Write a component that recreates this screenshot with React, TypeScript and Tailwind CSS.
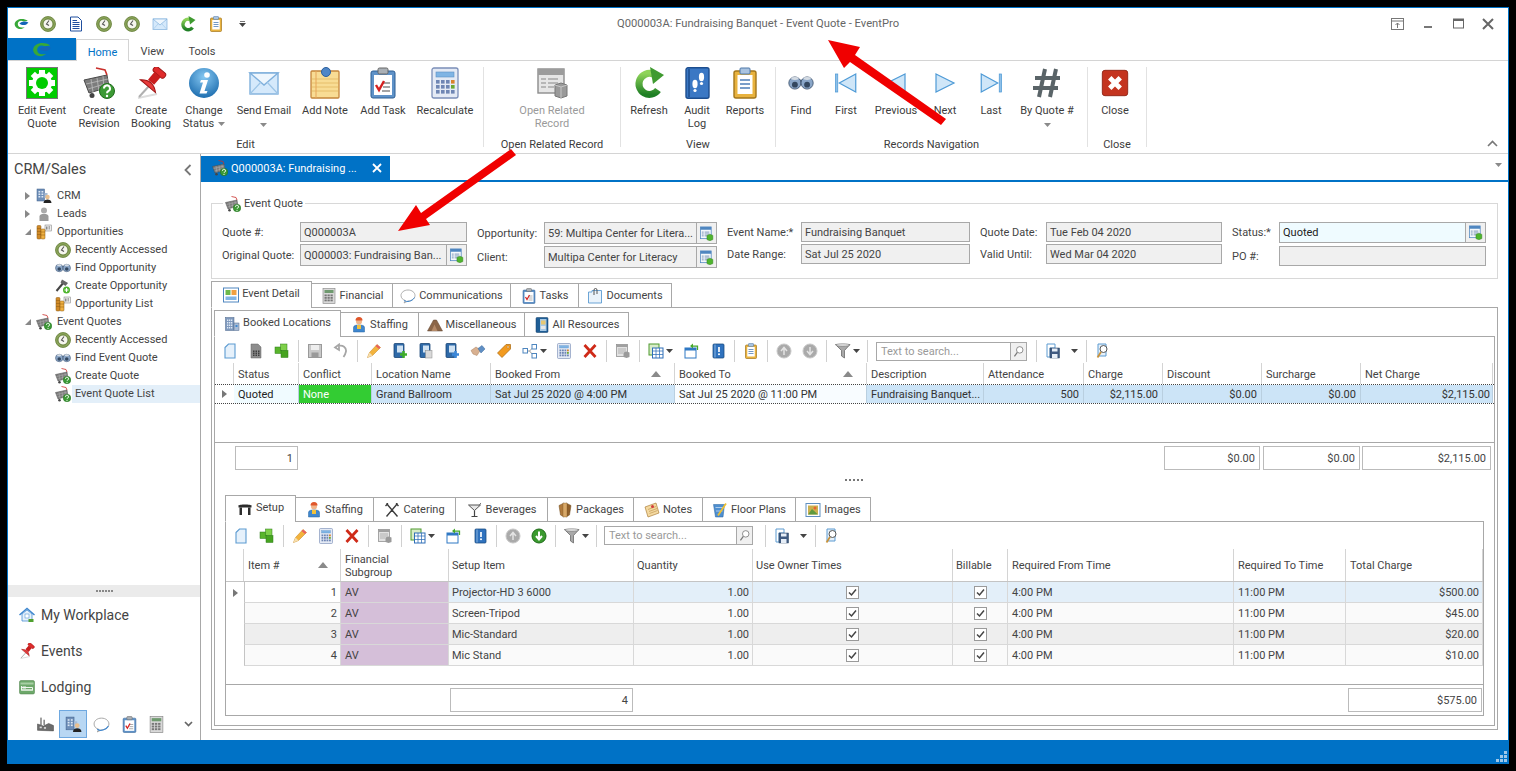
import React from 'react';

// small helper: every icon is drawn in a 32x32 box and scaled
const ic = (body: React.ReactNode) =>
  function Icon({ s = 16 }: { s?: number }) {
    return (
      <svg width={s} height={s} viewBox="0 0 32 32" className="block shrink-0">
        {body}
      </svg>
    );
  };

const Badge = ({ x = 24, y = 24, r = 7.5 }: { x?: number; y?: number; r?: number }) => (
  <>
    <circle cx={x} cy={y} r={r} fill="#3c9a35" stroke="#1f6b1c" />
    <path d={`M${x - 3} ${y - 2.5}a3 3 0 1 1 4.5 2.5q-1.5 .8-1.5 2.2`} fill="none" stroke="#fff" strokeWidth="2" />
    <circle cx={x} cy={y + 5} r="1.2" fill="#fff" />
  </>
);

const Logo = ic(
  <>
    <path d="M3 17C4 8 18 4 28 11L20 12C14 9 9 12 9 17C9 23 15 25 22 23C16 29 4 27 3 17Z" fill="#38a838" />
    <path d="M12 16c4-4 11-5 17-2c-3 5-11 7-17 2z" fill="#1565b8" />
  </>
);
const Clock = ic(
  <>
    <circle cx="16" cy="16" r="15" fill="#8aa35a" stroke="#5f7a30" strokeWidth="1.5" />
    <circle cx="16" cy="16" r="10" fill="#f6f6ee" stroke="#4e6b1f" strokeWidth="1.5" />
    <path d="M18 9l-5 7l5 3" fill="none" stroke="#555" strokeWidth="2.2" />
  </>
);
const DocLines = ic(
  <>
    <path d="M5 2h15l7 7v21H5z" fill="#fff" stroke="#1f4e9e" strokeWidth="2" />
    <path d="M9 9h9M9 13h14M9 17h14M9 21h14M9 25h14" stroke="#1f4e9e" strokeWidth="2" />
  </>
);
const Mail = ic(
  <>
    <rect x="2" y="6" width="28" height="21" fill="#d5e9fb" stroke="#7fb0dc" strokeWidth="1.4" />
    <path d="M2 6l14 12L30 6z" fill="#eef6fd" stroke="#7fb0dc" strokeWidth="1.4" />
    <path d="M2 27l11-12M30 27L19 15" stroke="#9cc4e6" strokeWidth="1.2" />
  </>
);
const Refresh = ic(
  <>
    <defs>
      <linearGradient id="rf" x1="0" y1="0" x2="0" y2="1">
        <stop offset="0" stopColor="#8fd45a" />
        <stop offset="1" stopColor="#1f7f25" />
      </linearGradient>
    </defs>
    <path d="M25 23A10.5 10.5 0 1 1 20 7" fill="none" stroke="url(#rf)" strokeWidth="7" />
    <path d="M17 0L31 8L20 17Z" fill="#3f9a30" />
  </>
);
const ClipYellow = ic(
  <>
    <rect x="5" y="4" width="22" height="27" rx="2" fill="#e8b23e" stroke="#a3761a" strokeWidth="1.4" />
    <rect x="8.5" y="8" width="15" height="19" fill="#fff" />
    <path d="M11 13h10M11 17h10M11 21h10" stroke="#4f7fb8" strokeWidth="1.6" />
    <rect x="11" y="1" width="10" height="6" rx="1" fill="#a9c3e0" stroke="#4e78a8" />
  </>
);
const Gear = ic(
  <>
    <rect x="0.5" y="0.5" width="31" height="31" fill="#00cc00" stroke="#777" />
    {[0, 45, 90, 135].map((a) => (
      <rect key={a} x="13" y="3" width="6" height="26" fill="#fff" transform={`rotate(${a} 16 16)`} />
    ))}
    <circle cx="16" cy="16" r="10" fill="#fff" />
    <circle cx="16" cy="16" r="6" fill="#00cc00" />
  </>
);
const Cart = ic(
  <>
    <path d="M1 13L24 8L26 20L6 26Z" fill="#7c7c7c" stroke="#4a4a4a" />
    <path d="M3 17L25 12M5 22L25 16M8 12L10 25M14 11L16 24M20 9L21 22" stroke="#bdbdbd" strokeWidth=".8" />
    <path d="M24 8L22 3L13 1" fill="none" stroke="#c9302c" strokeWidth="1.6" />
    <circle cx="9" cy="28.5" r="2.5" fill="#444" />
    <Badge />
  </>
);
const Pin = ic(
  <>
    <path d="M3 31L22 27" stroke="#ddd" strokeWidth="2" />
    <path d="M4 30L14 19" stroke="#b0b0b0" strokeWidth="2" />
    <g transform="rotate(40 18 13)">
      <rect x="11" y="0" width="14" height="6" rx="2.5" fill="#e02b2b" stroke="#9d1414" />
      <rect x="14" y="6" width="8" height="10" fill="#c91d1d" />
      <path d="M8 21q10-9 20 0z" fill="#e83a3a" stroke="#9d1414" />
    </g>
  </>
);
const Info = ic(
  <>
    <defs>
      <radialGradient id="nf" cx=".5" cy=".3" r=".75">
        <stop offset="0" stopColor="#86c8f2" />
        <stop offset="1" stopColor="#1768ab" />
      </radialGradient>
    </defs>
    <circle cx="16" cy="16" r="15" fill="url(#nf)" />
    <circle cx="19" cy="8" r="2.8" fill="#fff" />
    <path d="M13 13h7l-3.5 11h3l-1 2.5h-7l3.5-11h-3z" fill="#fff" />
  </>
);
const Note = ic(
  <>
    <rect x="2" y="4" width="28" height="27" rx="1" fill="#f8dc94" stroke="#c4853a" strokeWidth="1.3" />
    <path d="M3 12h26M3 16h26M3 20h26M3 24h26" stroke="#e6bd6a" strokeWidth="1.2" />
    <path d="M7 4v27" stroke="#e6a65a" />
    <circle cx="17" cy="5" r="4.5" fill="#4f86c6" stroke="#2b5f9e" />
  </>
);
const Task = ic(
  <>
    <rect x="4" y="4" width="24" height="27" rx="2" fill="#5f92c8" stroke="#2d5e94" />
    <rect x="7" y="8" width="18" height="20" fill="#fff" />
    <path d="M15 16h8M16 20h7M15 24h8" stroke="#888" strokeWidth="1.3" />
    <path d="M9 18l3 5l5-9" fill="none" stroke="#d42020" strokeWidth="2.4" />
    <rect x="11" y="1" width="10" height="6" rx="1.5" fill="#aab0b6" stroke="#666" />
  </>
);
const Calc = ic(
  <>
    <rect x="3" y="1" width="26" height="30" rx="2" fill="#e4eaf5" stroke="#7b8fb8" strokeWidth="1.3" />
    <rect x="7" y="5" width="18" height="5" fill="#7fb4e4" stroke="#5b8fc2" strokeWidth=".6" />
    {[13, 18, 23].map((y) =>
      [7, 12, 17, 22].map((x) => (
        <rect key={`${x}${y}`} x={x} y={y} width="3.6" height="3.6" fill={x === 22 ? (y === 13 ? '#d9822b' : y === 18 ? '#6ca832' : '#6f86b4') : '#6f86b4'} />
      )),
    )}
  </>
);
const CalcGray = ic(
  <>
    <rect x="4" y="1" width="24" height="30" fill="#d9d9d9" stroke="#8a8a8a" strokeWidth="1.3" />
    <rect x="7" y="4" width="18" height="6" fill="#6f9a6f" />
    {[13, 18, 23].map((y) =>
      [7, 13, 19].map((x) => <rect key={`${x}${y}`} x={x} y={y} width="4.5" height="3.6" fill="#777" />),
    )}
  </>
);
const OpenRelated = ic(
  <>
    <rect x="2" y="2" width="26" height="24" fill="#e6e6e6" stroke="#8c8c8c" strokeWidth="1.4" />
    <rect x="2" y="2" width="26" height="6" fill="#9c9c9c" />
    <path d="M5 12h5M12 12h10M5 16h5M12 16h10M5 20h5M12 20h6" stroke="#a8a8a8" strokeWidth="1.4" />
    <path d="M19 18l6-2l6 2v11l-6 2l-6-2z" fill="#9a9a9a" stroke="#777" />
    <path d="M25 20v11M19 18l6 2l6-2" fill="none" stroke="#c6c6c6" />
  </>
);
const Lookup = ic(
  <>
    <rect x="3" y="2" width="23" height="25" fill="#f4f8fc" stroke="#4f86c0" strokeWidth="1.6" />
    <rect x="3" y="2" width="23" height="6" fill="#4f86c0" />
    <path d="M6 13h4M12 13h10M6 17h4M12 17h10M6 21h4M12 21h6" stroke="#5a7aa5" strokeWidth="1.6" />
    <path d="M17 20l6-2.5l6.5 2.5v9l-6.5 2.5l-6-2.5z" fill="#4fb52e" stroke="#2c7d18" />
  </>
);
const AuditBook = ic(
  <>
    <rect x="5" y="0.8" width="23" height="30.4" rx="2" fill="#3b78c4" stroke="#1d4e8f" strokeWidth="1.4" />
    <path d="M8 2v28" stroke="#1d4e8f" strokeWidth="1.5" />
    <ellipse cx="20.5" cy="10" rx="2.6" ry="4.2" fill="#fff" />
    <ellipse cx="20.5" cy="16.5" rx="1.6" ry="1.6" fill="#fff" />
    <ellipse cx="14" cy="17" rx="2.6" ry="4.2" fill="#fff" />
    <ellipse cx="14" cy="23.5" rx="1.6" ry="1.6" fill="#fff" />
  </>
);
const Binoculars = ic(
  <>
    <rect x="12" y="12" width="8" height="6" fill="#42536a" />
    <circle cx="8.5" cy="16" r="7.5" fill="#8aa6c8" stroke="#3a4f6a" />
    <circle cx="23.5" cy="16" r="7.5" fill="#8aa6c8" stroke="#3a4f6a" />
    <circle cx="8.5" cy="18" r="3.6" fill="#33475f" />
    <circle cx="23.5" cy="18" r="3.6" fill="#33475f" />
    <ellipse cx="8.5" cy="10.5" rx="4.5" ry="1.8" fill="#d4dbe3" />
    <ellipse cx="23.5" cy="10.5" rx="4.5" ry="1.8" fill="#d4dbe3" />
  </>
);
const navTri = { fill: '#cfe6f8', stroke: '#4e9ad6', strokeWidth: 1.6 };
const First = ic(
  <>
    <rect x="2" y="4" width="3" height="24" fill="#8fc0e8" stroke="#4e9ad6" />
    <path d="M29 4L7 16L29 28Z" {...navTri} />
  </>
);
const Prev = ic(<path d="M28 4L4 16L28 28Z" {...navTri} />);
const Next = ic(<path d="M4 4L28 16L4 28Z" {...navTri} />);
const Last = ic(
  <>
    <rect x="27" y="4" width="3" height="24" fill="#8fc0e8" stroke="#4e9ad6" />
    <path d="M3 4L25 16L3 28Z" {...navTri} />
  </>
);
const Hash = ic(<path d="M14 2L8 30M25 2L19 30M4 11H29M2 21H27" stroke="#5a6468" strokeWidth="4" fill="none" />);
const CloseRed = ic(
  <>
    <rect x="1.5" y="1.5" width="29" height="29" rx="3" fill="#c4341f" stroke="#8e2010" />
    <path d="M10 10L22 22M22 10L10 22" stroke="#fff" strokeWidth="5.5" />
  </>
);
const NewDoc = ic(<path d="M6 9l7-7h13v28H6z" fill="#e6f1fb" stroke="#5c9bd1" strokeWidth="2.2" />);
const SimDoc = ic(
  <>
    <path d="M6 2h14l6 6v22H6z" fill="#8d8d8d" stroke="#666" />
    {[15, 19, 23].map((y) =>
      [10, 15, 20].map((x) => <rect key={`${x}${y}`} x={x} y={y} width="3" height="3" fill="#3e3e3e" />),
    )}
  </>
);
const Cubes = ic(
  <>
    <rect x="2" y="8" width="13" height="13" fill="#59b52c" stroke="#2c7d18" />
    <rect x="13" y="2" width="13" height="13" fill="#7ed04a" stroke="#2c7d18" />
    <rect x="14" y="15" width="14" height="14" fill="#46a320" stroke="#2c7d18" />
  </>
);
const Floppy = ({ s = 16, c = '#9a9a9a', d = '#c9c9c9' }: { s?: number; c?: string; d?: string }) => (
  <svg width={s} height={s} viewBox="0 0 32 32" className="block shrink-0">
    <rect x="3" y="3" width="26" height="26" fill={d} stroke={c} strokeWidth="2" />
    <rect x="8" y="4" width="16" height="10" fill="#eee" />
    <rect x="9" y="19" width="14" height="10" fill={c} />
  </svg>
);
const SaveGray = () => <Floppy />;
const Undo = ic(<path d="M10 6C20 3 27 9 26 17C25 22 23 25 21 28M4 9L12 3L12 14Z" fill="none" stroke="#a6a6a6" strokeWidth="3.5" />);
const Pencil = ic(
  <>
    <path d="M3 29L7 19L22 3L29 9L13 25Z" fill="#f3b33d" stroke="#c07f16" />
    <path d="M3 29L7 19L13 25Z" fill="#f6dfb0" />
    <path d="M22 3L29 9L26 12L19 6Z" fill="#e86060" />
  </>
);
const BookBase = () => (
  <>
    <rect x="4" y="1" width="20" height="28" rx="2" fill="#2f6aa8" stroke="#123f70" strokeWidth="1.5" />
    <rect x="10" y="5" width="12" height="14" fill="#cfe2f3" />
  </>
);
const BookPlus = ic(
  <>
    <BookBase />
    <path d="M23 16v14M16 23h14" stroke="#3fae2a" strokeWidth="5" />
  </>
);
const BookCopy = ic(
  <>
    <BookBase />
    <rect x="15" y="15" width="13" height="15" fill="#d9d9d9" stroke="#8a8a8a" />
  </>
);
const BookBlue = ic(
  <>
    <BookBase />
    <path d="M23 16v14M16 23h14" stroke="#3b87d8" strokeWidth="5" />
  </>
);
const Handshake = ic(
  <>
    <path d="M2 15L12 8L21 14L14 25L6 22Z" fill="#d8b090" stroke="#a8805f" />
    <path d="M16 11L24 5L30 12L22 20Z" fill="#5f8fc4" stroke="#3e6a9c" />
  </>
);
const TagIcon = ic(
  <>
    <path d="M3 20L20 3L29 3L29 12L12 29Z" fill="#f29a1f" stroke="#a8650c" strokeWidth="1.4" />
    <circle cx="24" cy="8" r="2" fill="#fff" stroke="#a8650c" />
  </>
);
const Nodes = ic(
  <>
    <path d="M9 16H15L23 8M15 16L23 25" fill="none" stroke="#777" strokeWidth="1.5" />
    <rect x="2" y="11" width="9" height="9" fill="#fff" stroke="#4e86bf" strokeWidth="2" />
    <rect x="20" y="3" width="9" height="9" fill="#fff" stroke="#4e86bf" strokeWidth="2" />
    <rect x="20" y="21" width="9" height="9" fill="#fff" stroke="#4e86bf" strokeWidth="2" />
  </>
);
const RedX = ic(<path d="M5 4L27 28M27 4L5 28" stroke="#cf2a18" strokeWidth="5.5" />);
const GrayDoc = ic(
  <>
    <rect x="3" y="3" width="22" height="24" fill="#e2e2e2" stroke="#8c8c8c" strokeWidth="1.5" />
    <rect x="3" y="3" width="22" height="5" fill="#a0a0a0" />
    <path d="M6 12h16M6 16h16M6 20h10" stroke="#a4a4a4" strokeWidth="1.6" />
    <path d="M17 19l6-2l6 2v9l-6 2l-6-2z" fill="#9a9a9a" />
  </>
);
const GridGreen = ic(
  <>
    <rect x="2" y="2" width="20" height="22" fill="#d8ecc8" stroke="#4f9a2f" strokeWidth="2" />
    <rect x="9" y="10" width="21" height="20" fill="#fff" stroke="#2f6fb8" strokeWidth="2" />
    <path d="M9 16h21M9 23h21M16 10v20M23 10v20" stroke="#2f6fb8" strokeWidth="1.5" />
  </>
);
const WinRestore = ic(
  <>
    <rect x="2" y="10" width="22" height="20" fill="#fff" stroke="#2f78c4" strokeWidth="2" />
    <rect x="2" y="10" width="22" height="5" fill="#2f78c4" />
    <path d="M14 6H27V14" fill="none" stroke="#47a82c" strokeWidth="2.5" />
    <path d="M18 1L12 6L18 11Z" fill="#47a82c" />
  </>
);
const BookI = ic(
  <>
    <rect x="6" y="2" width="22" height="28" rx="2" fill="#2f72be" stroke="#17487e" strokeWidth="1.5" />
    <path d="M10 3v26" stroke="#a9c9ea" strokeWidth="1.5" />
    <path d="M18 8v10" stroke="#fff" strokeWidth="3.4" />
    <circle cx="18" cy="22.5" r="2" fill="#fff" />
  </>
);
const CircleUp = ic(
  <>
    <circle cx="16" cy="16" r="14" fill="#aaaaaa" stroke="#c8c8c8" strokeWidth="2" />
    <path d="M16 24V11M10 16l6-7l6 7" fill="none" stroke="#e4e4e4" strokeWidth="3" />
  </>
);
const CircleDown = ic(
  <>
    <circle cx="16" cy="16" r="14" fill="#aaaaaa" stroke="#c8c8c8" strokeWidth="2" />
    <path d="M16 8V21M10 16l6 7l6-7" fill="none" stroke="#e4e4e4" strokeWidth="3" />
  </>
);
const GreenDown = ic(
  <>
    <circle cx="16" cy="16" r="14" fill="#3a9a2e" stroke="#1e6b18" strokeWidth="2" />
    <path d="M16 7V21M10 16l6 7l6-7" fill="none" stroke="#fff" strokeWidth="4" />
  </>
);
const Funnel = ic(
  <>
    <path d="M1 3H30L19 15V30L13 26V15Z" fill="#a9a9a9" stroke="#5d5d5d" strokeWidth="1.4" />
    <ellipse cx="15.5" cy="4" rx="14" ry="2.5" fill="#e6e6e6" stroke="#5d5d5d" />
  </>
);
const SaveBlue = ic(
  <>
    <path d="M4 2H20V10H10V28H4Z" fill="#fff" stroke="#5c9bd1" strokeWidth="2" />
    <rect x="10" y="10" width="19" height="20" fill="#3f5a80" stroke="#24405f" />
    <rect x="14" y="11" width="11" height="6" fill="#e6eef7" />
    <rect x="14" y="22" width="11" height="8" fill="#e6eef7" />
  </>
);
const PageMag = ic(
  <>
    <path d="M6 2H22V26H6Z" fill="#e6f1fb" stroke="#5c9bd1" strokeWidth="2" />
    <circle cx="17" cy="12" r="7" fill="#fff" stroke="#555" strokeWidth="2" />
    <path d="M12 18L5 29" stroke="#c99138" strokeWidth="3.5" />
  </>
);
const MagGlass = ic(
  <>
    <circle cx="19" cy="12" r="8" fill="#fff" stroke="#777" strokeWidth="2" />
    <path d="M13 18L6 28" stroke="#777" strokeWidth="3" />
  </>
);
const Panes = ic(
  <>
    <rect x="1" y="2" width="30" height="28" fill="#fff" stroke="#4f86c0" strokeWidth="2" />
    <rect x="5" y="6" width="10" height="10" fill="#6cb84a" />
    <rect x="17" y="6" width="10" height="10" fill="#f0a040" />
    <rect x="5" y="19" width="22" height="7" fill="#7fb4e4" />
  </>
);
const Bubble = ic(
  <>
    <path d="M16 4C8 4 2 9 2 15C2 20 6 24 11 25L8 30L16 26C24 26 30 21 30 15C30 9 24 4 16 4Z" fill="#fff" stroke="#9a9a9a" strokeWidth="1.6" />
    <path d="M8 25C14 29 24 27 29 19" fill="none" stroke="#3f87cf" strokeWidth="2" />
  </>
);
const DocClip = ic(
  <>
    <path d="M3 8H10V5H29V30H3Z" fill="#eaf3fb" stroke="#5c9bd1" strokeWidth="1.8" />
    <path d="M14 14V4a3 3 0 0 1 6 0V12" fill="none" stroke="#555" strokeWidth="2" />
  </>
);
const Building = ic(
  <>
    <rect x="3" y="3" width="17" height="26" fill="#7f99bd" stroke="#4b6589" />
    <rect x="20" y="14" width="10" height="15" fill="#a9bcd6" stroke="#4b6589" />
    {[7, 12, 17, 22].map((y) =>
      [6, 10, 14].map((x) => <rect key={`${x}${y}`} x={x} y={y} width="2.6" height="3" fill="#dfe9f5" />),
    )}
    <rect x="23" y="18" width="4" height="4" fill="#3f87cf" />
  </>
);
const Worker = ic(
  <>
    <circle cx="16" cy="9" r="6" fill="#f1b58a" />
    <path d="M9 7a7 7 0 0 1 14 0z" fill="#e0562a" />
    <path d="M5 30V21C5 17 10 16 16 16S27 17 27 21V30Z" fill="#3f87cf" stroke="#24639f" />
    <rect x="12" y="16" width="8" height="8" fill="#f3c23c" />
  </>
);
const Mound = ic(
  <>
    <path d="M1 28L13 6H19L31 28Z" fill="#8b6648" stroke="#5f4330" />
    <path d="M9 28L15 15L21 28Z" fill="#b48a68" />
  </>
);
const Resources = ic(
  <>
    <rect x="4" y="1" width="24" height="30" rx="2" fill="#1f5e96" stroke="#113f69" />
    <rect x="12" y="4" width="13" height="24" fill="#a7c9e6" />
    <rect x="14" y="7" width="9" height="8" fill="#e8c873" />
    <rect x="14" y="18" width="9" height="6" fill="#e8e8e8" />
  </>
);
const Table = ic(
  <>
    <path d="M3 9C3 6 29 6 29 9V13H3Z" fill="#2c2c2c" />
    <path d="M5 13H10V28H5ZM22 13H27V28H22Z" fill="#2c2c2c" />
  </>
);
const Cutlery = ic(<path d="M5 3L27 29M27 3L5 29M3 8L8 3M24 3L29 8" stroke="#3c3c3c" strokeWidth="2.8" fill="none" />);
const Martini = ic(
  <>
    <path d="M3 6H27L15 17Z" fill="#e6e6e6" stroke="#555" strokeWidth="2" />
    <path d="M15 17V28M9 29H21" stroke="#444" strokeWidth="2.4" />
    <path d="M23 7L28 2" stroke="#777" strokeWidth="2" />
  </>
);
const BoxIcon = ic(
  <>
    <path d="M4 7L14 2V30L7 26Z" fill="#b07a3c" stroke="#6e4a1e" />
    <path d="M28 7L18 2V30L25 26Z" fill="#8f5f2a" stroke="#6e4a1e" />
    <rect x="12" y="2" width="8" height="28" fill="#d8a868" stroke="#6e4a1e" strokeWidth=".6" />
  </>
);
const NoteTilt = ic(
  <>
    <path d="M2 10L24 2L30 22L8 30Z" fill="#f4d9a0" stroke="#ad7f3b" strokeWidth="1.4" />
    <path d="M8 15L24 9M10 19L26 13M11 23L27 17" stroke="#b98d4a" strokeWidth="1.2" />
    <circle cx="17" cy="9" r="3" fill="#d43c3c" />
  </>
);
const FloorPlan = ic(
  <>
    <path d="M3 5H25L22 30H7Z" fill="#4f8fd0" stroke="#24609f" />
    <path d="M7 11H22M8 18H21" stroke="#cfe2f5" strokeWidth="1.5" />
    <path d="M12 27L28 3" stroke="#f0c030" strokeWidth="3.5" />
  </>
);
const Picture = ic(
  <>
    <rect x="2" y="3" width="28" height="26" fill="#fff" stroke="#5f8fc0" strokeWidth="2" />
    <rect x="6" y="7" width="20" height="18" fill="#cbb04e" />
    <path d="M6 25L14 14L26 25Z" fill="#5f9a3e" />
    <circle cx="20" cy="12" r="3" fill="#e8642c" />
  </>
);
const Person = ic(
  <>
    <circle cx="16" cy="9" r="6" fill="#aaaaaa" />
    <path d="M7 30V21C7 17 11 16 16 16S25 17 25 21V30Z" fill="#999" />
  </>
);
const BuildingPerson = ic(
  <>
    <rect x="2" y="2" width="15" height="24" fill="#6f8fb8" stroke="#3f5f8a" />
    {[6, 11, 16].map((y) =>
      [5, 11].map((x) => <rect key={`${x}${y}`} x={x} y={y} width="3.5" height="3" fill="#dde8f4" />),
    )}
    <rect x="17" y="10" width="6" height="10" fill="#a8bcd6" />
    <circle cx="23" cy="18" r="4.5" fill="#e9c08f" />
    <path d="M15 30C15 25 19 23 23 23S31 25 31 30Z" fill="#222" />
  </>
);
const Coins = ic(
  <>
    <rect x="18" y="2" width="13" height="12" fill="#eee" stroke="#777" />
    <rect x="20" y="5" width="3" height="6" fill="#888" />
    <rect x="25" y="4" width="3" height="7" fill="#aaa" />
    <rect x="2" y="3" width="8" height="27" rx="2" fill="#d08a28" stroke="#8d5a12" />
    <rect x="10" y="10" width="8" height="20" rx="2" fill="#eeb042" stroke="#8d5a12" />
    <path d="M2 9h8M2 15h8M2 21h8M10 16h8M10 22h8" stroke="#8d5a12" strokeWidth="1" />
  </>
);
const ToolPlus = ic(
  <>
    <path d="M3 26L18 8" stroke="#444" strokeWidth="4" />
    <path d="M14 3L26 10L21 16L11 9Z" fill="#666" />
    <circle cx="23" cy="24" r="7" fill="#4fb52e" />
    <path d="M23 20v8M19 24h8" stroke="#fff" strokeWidth="2.4" />
  </>
);
const House = ic(
  <>
    <path d="M1 16L16 3L31 16" fill="none" stroke="#3f87cf" strokeWidth="3" />
    <path d="M6 14V28H26V14L16 6Z" fill="#e6f1fb" stroke="#3f87cf" strokeWidth="1.5" />
    <rect x="12" y="14" width="8" height="8" fill="#fff" stroke="#3f87cf" />
    <rect x="19" y="24" width="10" height="6" fill="#4fa02e" />
  </>
);
const Bed = ic(
  <>
    <rect x="1" y="3" width="30" height="27" rx="3" fill="#6da86a" stroke="#4a7f47" />
    <rect x="3" y="7" width="26" height="4" fill="#a8d0a4" />
    <path d="M5 23V14M27 23V17H5" fill="none" stroke="#f0f6ee" strokeWidth="2" />
    <rect x="7" y="15" width="7" height="4" fill="#f0f6ee" />
    <path d="M5 22H27" stroke="#f0f6ee" strokeWidth="3" />
  </>
);
const Factory = ic(
  <>
    <rect x="6" y="3" width="3" height="14" fill="#888" />
    <rect x="12" y="7" width="3" height="10" fill="#888" />
    <path d="M1 27V15L12 19L22 14L31 18V28Z" fill="#6c6c6c" stroke="#444" />
    <rect x="5" y="20" width="4" height="3" fill="#ddd" />
    <rect x="13" y="21" width="4" height="3" fill="#ddd" />
  </>
);
const Caret = () => (
  <svg width="7" height="4" viewBox="0 0 7 4" className="block shrink-0">
    <path d="M0 0H7L3.5 4Z" fill="#444" />
  </svg>
);
const GrayCaret = () => (
  <svg width="7" height="4" viewBox="0 0 7 4" className="block shrink-0">
    <path d="M0 0H7L3.5 4Z" fill="#8a8a8a" />
  </svg>
);

type RibBtn = { label: string[]; icon: React.ReactNode; w: string; caret?: 'line' | 'below'; muted?: boolean };
type RibGroup = { title: string; w: string; pl: string; buttons: RibBtn[] };

const ribbon: RibGroup[] = [
  {
    title: 'Edit',
    w: 'w-[476px]',
    pl: 'pl-[6px]',
    buttons: [
      { label: ['Edit Event', 'Quote'], icon: <Gear s={32} />, w: 'w-[56px]' },
      { label: ['Create', 'Revision'], icon: <Cart s={32} />, w: 'w-[58px]' },
      { label: ['Create', 'Booking'], icon: <Pin s={32} />, w: 'w-[46px]' },
      { label: ['Change', 'Status'], icon: <Info s={32} />, w: 'w-[60px]', caret: 'line' },
      { label: ['Send Email'], icon: <Mail s={32} />, w: 'w-[60px]', caret: 'below' },
      { label: ['Add Note'], icon: <Note s={32} />, w: 'w-[62px]' },
      { label: ['Add Task'], icon: <Task s={32} />, w: 'w-[54px]' },
      { label: ['Recalculate'], icon: <Calc s={32} />, w: 'w-[70px]' },
    ],
  },
  {
    title: 'Open Related Record',
    w: 'w-[137px]',
    pl: 'pl-0',
    buttons: [{ label: ['Open Related', 'Record'], icon: <OpenRelated s={32} />, w: 'w-[136px]', muted: true }],
  },
  {
    title: 'View',
    w: 'w-[155px]',
    pl: 'pl-0',
    buttons: [
      { label: ['Refresh'], icon: <Refresh s={32} />, w: 'w-[56px]' },
      { label: ['Audit', 'Log'], icon: <AuditBook s={32} />, w: 'w-[40px]' },
      { label: ['Reports'], icon: <ClipYellow s={32} />, w: 'w-[56px]' },
    ],
  },
  {
    title: 'Records Navigation',
    w: 'w-[312px]',
    pl: 'pl-0',
    buttons: [
      { label: ['Find'], icon: <Binoculars s={26} />, w: 'w-[50px]' },
      { label: ['First'], icon: <First s={24} />, w: 'w-[40px]' },
      { label: ['Previous'], icon: <Prev s={24} />, w: 'w-[60px]' },
      { label: ['Next'], icon: <Next s={24} />, w: 'w-[38px]' },
      { label: ['Last'], icon: <Last s={24} />, w: 'w-[54px]' },
      { label: ['By Quote #'], icon: <Hash s={32} />, w: 'w-[58px]', caret: 'below' },
    ],
  },
  {
    title: 'Close',
    w: 'w-[59px]',
    pl: 'pl-0',
    buttons: [{ label: ['Close'], icon: <CloseRed s={28} />, w: 'w-[54px]' }],
  },
];

function RibbonButton({ b }: { b: RibBtn }) {
  return (
    <div className={`${b.w} flex flex-col items-center shrink-0`}>
      <div className="h-[32px] w-full flex items-center justify-center">{b.icon}</div>
      <div className={`mt-[5px] flex flex-col items-center text-[11px] leading-[13px] whitespace-nowrap ${b.muted ? 'text-[#9a9a9a]' : 'text-[#3c3c3c]'}`}>
        {b.label.map((l, i) => (
          <span key={l} className="flex items-center gap-[4px]">
            {l}
            {b.caret === 'line' && i === 1 && <GrayCaret />}
          </span>
        ))}
        {b.caret === 'below' && (
          <span className="mt-[6px]">
            <GrayCaret />
          </span>
        )}
      </div>
    </div>
  );
}

function Ribbon() {
  return (
    <div className="h-[93px] flex border-b border-[#d4d4d4] relative shrink-0 pt-[6px]">
      {ribbon.map((g) => (
        <div key={g.title} className={`${g.w} shrink-0 flex items-start`}>
          <div className="flex-1 min-w-0 flex flex-col">
            <div className={`flex h-[70px] ${g.pl}`}>
              {g.buttons.map((b) => (
                <RibbonButton key={b.label[0]} b={b} />
              ))}
            </div>
            <div className="h-[14px] mt-px text-center text-[11px] leading-[14px] text-[#3c3c3c] whitespace-nowrap">{g.title}</div>
          </div>
          <div className="w-px h-[80px] bg-[#e2e2e2] shrink-0" />
        </div>
      ))}
      <div className="absolute right-[10px] bottom-[6px]">
        <svg width="11" height="7" viewBox="0 0 11 7" className="block">
          <path d="M1 6L5.5 1.5L10 6" fill="none" stroke="#777" strokeWidth="1.6" />
        </svg>
      </div>
    </div>
  );
}

function TitleBar() {
  const qat = [Clock, DocLines, Clock, Clock, Mail, Refresh, ClipYellow];
  return (
    <div className="h-[31px] flex items-center relative shrink-0">
      <div className="flex items-center pl-[5px]">
        <div className="w-[16px]">
          <Logo s={17} />
        </div>
        <div className="flex items-center ml-[5px]">
          {qat.map((Q, i) => (
            <div key={i} className="w-[28px] flex justify-center">
              <Q s={16} />
            </div>
          ))}
        </div>
        <div className="ml-[9px] flex flex-col gap-[1px] items-center">
          <div className="w-[5px] h-[1px] bg-[#777]" />
          <Caret />
        </div>
      </div>
      <div className="flex-1 text-center text-[11.2px] text-[#666] -ml-[120px] mt-[2px] whitespace-nowrap">
        Q000003A: Fundraising Banquet - Event Quote - EventPro
      </div>
      <div className="flex items-center gap-[14px] pr-[12px] text-[#666]">
        <svg width="16" height="16" viewBox="0 0 16 16" className="block">
          <rect x="1.5" y="2.5" width="12" height="11" fill="none" stroke="#777" />
          <path d="M1.5 5H13.5M7.5 12V7M5.5 9L7.5 7L9.5 9" fill="none" stroke="#777" />
        </svg>
        <svg width="16" height="16" viewBox="0 0 16 16" className="block">
          <path d="M4 11H12" stroke="#777" strokeWidth="2" />
        </svg>
        <svg width="16" height="16" viewBox="0 0 16 16" className="block">
          <rect x="3.5" y="3" width="10" height="9" fill="none" stroke="#666" />
          <path d="M3.5 4H13.5" stroke="#666" strokeWidth="2" />
        </svg>
        <svg width="16" height="16" viewBox="0 0 16 16" className="block">
          <path d="M3 3L13 13M13 3L3 13" stroke="#666" strokeWidth="2" />
        </svg>
      </div>
    </div>
  );
}

function RibbonTabs() {
  return (
    <div className="h-[22px] flex items-end border-b border-[#d4d4d4] shrink-0 text-[11px]">
      <div className="w-[68px] h-[22px] bg-[#0072c6] flex items-center justify-center">
        <Logo s={22} />
      </div>
      <div className="w-[53px] h-[22px] -mb-px pt-[5px] bg-white border border-b-0 border-[#d4d4d4] flex items-center justify-center text-[#0072c6]">Home</div>
      <div className="w-[47px] h-[21px] pt-[5px] flex items-center justify-center text-[#444]">View</div>
      <div className="w-[52px] h-[21px] pt-[5px] flex items-center justify-center text-[#444]">Tools</div>
    </div>
  );
}

type TreeRow = { label: string; icon: React.ReactNode; lvl: 1 | 2; open?: boolean; sel?: boolean };
const tree: TreeRow[] = [
  { label: 'CRM', icon: <BuildingPerson />, lvl: 1 },
  { label: 'Leads', icon: <Person />, lvl: 1 },
  { label: 'Opportunities', icon: <Coins />, lvl: 1, open: true },
  { label: 'Recently Accessed', icon: <Clock />, lvl: 2 },
  { label: 'Find Opportunity', icon: <Binoculars />, lvl: 2 },
  { label: 'Create Opportunity', icon: <ToolPlus />, lvl: 2 },
  { label: 'Opportunity List', icon: <Coins />, lvl: 2 },
  { label: 'Event Quotes', icon: <Cart />, lvl: 1, open: true },
  { label: 'Recently Accessed', icon: <Clock />, lvl: 2 },
  { label: 'Find Event Quote', icon: <Binoculars />, lvl: 2 },
  { label: 'Create Quote', icon: <Cart />, lvl: 2 },
  { label: 'Event Quote List', icon: <Cart />, lvl: 2, sel: true },
];

function Sidebar() {
  return (
    <div className="w-[193px] shrink-0 flex flex-col border-r border-[#a8a8a8]">
      <div className="h-[31px] mb-[2px] pt-[1px] flex items-center justify-between pl-[6px] pr-[8px]">
        <span className="text-[14.5px] text-[#444]">CRM/Sales</span>
        <svg width="8" height="12" viewBox="0 0 8 12" className="block">
          <path d="M6.5 1L1.5 6L6.5 11" fill="none" stroke="#777" strokeWidth="1.8" />
        </svg>
      </div>
      <div className="flex-1 flex flex-col text-[11px] text-[#444]">
        {tree.map((r, i) =>
          r.lvl === 1 ? (
            <div key={i} className="h-[18px] flex items-center pl-[17px]">
              <div className="w-[11px] shrink-0">
                {r.open ? (
                  <svg width="6" height="6" viewBox="0 0 6 6" className="block">
                    <path d="M6 0V6H0Z" fill="#888" />
                  </svg>
                ) : (
                  <svg width="5" height="8" viewBox="0 0 5 8" className="block">
                    <path d="M0 0L5 4L0 8Z" fill="#888" />
                  </svg>
                )}
              </div>
              <div className="w-[21px] shrink-0">{r.icon}</div>
              <span>{r.label}</span>
            </div>
          ) : (
            <div key={i} className="h-[18px] flex items-center pl-[47px]">
              <div className="w-[17px] shrink-0">{r.icon}</div>
              <span className={`h-[18px] flex-1 flex items-center pl-[3px] ${r.sel ? 'bg-[#e3eff9]' : ''}`}>{r.label}</span>
            </div>
          ),
        )}
      </div>
      <div className="h-[12px] bg-[#ebebeb] flex items-center justify-center gap-[1px] shrink-0">
        {[0, 1, 2, 3, 4, 5].map((d) => (
          <div key={d} className="w-[2px] h-[2px] bg-[#888]" />
        ))}
      </div>
      <div className="flex flex-col text-[14px] text-[#444]">
        <div className="h-[36px] flex items-center pl-[11px] gap-[6px]">
          <House s={16} />
          <span>My Workplace</span>
        </div>
        <div className="h-[36px] flex items-center pl-[11px] gap-[6px]">
          <Pin s={16} />
          <span>Events</span>
        </div>
        <div className="h-[36px] flex items-center pl-[11px] gap-[6px]">
          <Bed s={16} />
          <span>Lodging</span>
        </div>
      </div>
      <div className="h-[35px] flex items-center pl-[23px] pt-[5px] pb-[2px]">
        <div className="w-[28px] flex justify-center">
          <Factory s={17} />
        </div>
        <div className="w-[28px] h-[28px] bg-[#b8d7f3] border border-[#6ea8e0] flex items-center justify-center">
          <BuildingPerson s={17} />
        </div>
        <div className="w-[28px] flex justify-center">
          <Bubble s={17} />
        </div>
        <div className="w-[28px] flex justify-center">
          <Task s={17} />
        </div>
        <div className="w-[26px] flex justify-center">
          <CalcGray s={17} />
        </div>
        <div className="ml-[15px]">
          <svg width="9" height="6" viewBox="0 0 9 6" className="block">
            <path d="M1 1L4.5 4.5L8 1" fill="none" stroke="#666" strokeWidth="1.7" />
          </svg>
        </div>
      </div>
    </div>
  );
}

const Sep = () => <div className="w-px h-[22px] mx-[3px] bg-[#d0d0d0] shrink-0" />;

function Tb({ icon }: { icon: React.ReactNode }) {
  return <div className="w-[26px] h-[22px] flex items-center justify-center shrink-0">{icon}</div>;
}
function TbDrop({ icon, w = 'w-[34px]' }: { icon: React.ReactNode; w?: string }) {
  return (
    <div className={`${w} h-[22px] flex items-center pl-[5px] gap-[2px] shrink-0`}>
      {icon}
      <Caret />
    </div>
  );
}
function TbCaret() {
  return (
    <div className="w-[17px] h-[22px] flex items-center justify-center shrink-0">
      <Caret />
    </div>
  );
}
function Search({ cls }: { cls: string }) {
  return (
    <div className={`${cls} h-[19px] border border-[#a8a8a8] flex items-center shrink-0`}>
      <span className="flex-1 pl-[4px] pt-[2px] text-[11px] text-[#9a9a9a] whitespace-nowrap">Text to search...</span>
      <div className="w-[16px] h-full bg-[#f0f0f0] border-l border-[#a8a8a8] flex items-center justify-center">
        <MagGlass s={13} />
      </div>
    </div>
  );
}

function Tab({ label, icon, w, active }: { label: string; icon: React.ReactNode; w: string; active?: boolean }) {
  return (
    <div className={`${w} ${active ? 'h-[27px] border-b-white' : 'h-[25px] pt-px border-b-[#a8a8a8]'} -ml-px first:ml-0 shrink-0 bg-white border border-[#a8a8a8] flex items-center justify-center gap-[3px] text-[11px] text-[#444] whitespace-nowrap`}>
      {icon}
      <span>{label}</span>
    </div>
  );
}

function Field({ v, cls, tint, lookup }: { v?: string; cls: string; tint?: boolean; lookup?: boolean }) {
  return (
    <div className={`${cls} border border-[#a8a8a8] ${tint ? 'bg-[#effbff]' : 'bg-[#f0f0f0]'} flex items-center text-[11px] ${tint ? 'text-[#222]' : 'text-[#444]'}`}>
      <span className="flex-1 px-[3px] pt-[2px] whitespace-nowrap">{v}</span>
      {lookup && (
        <div className="w-[20px] h-full bg-[#f0f0f0] border-l border-[#a8a8a8] flex items-center justify-center shrink-0">
          <Lookup s={15} />
        </div>
      )}
    </div>
  );
}

function Label({ t, cls }: { t: string; cls: string }) {
  return <div className={`${cls} pt-[2px] flex items-center text-[11px] text-[#444] whitespace-nowrap shrink-0`}>{t}</div>;
}

function QuoteHeader() {
  return (
    <div className="h-[76px] mt-[21px] border border-[#d8d8d8] relative shrink-0 flex items-start pl-[10px] pt-[18px]">
      <div className="absolute left-[11px] -top-[8px] px-[2px] bg-white flex items-center gap-[3px] text-[11px] text-[#444] h-[16px]">
        <Cart s={16} />
        <span>Event Quote</span>
      </div>
      <div className="flex flex-col gap-[2px] shrink-0 w-[245px]">
        <div className="flex">
          <Label t="Quote #:" cls="w-[78px] h-[20px]" />
          <Field v="Q000003A" cls="w-[167px] h-[20px]" />
        </div>
        <div className="flex">
          <Label t="Original Quote:" cls="w-[78px] h-[22px]" />
          <Field v="Q000003: Fundraising Ban..." cls="w-[167px] h-[22px]" lookup />
        </div>
      </div>
      <div className="ml-[10px] flex flex-col gap-[2px] shrink-0 w-[240px]">
        <div className="flex">
          <Label t="Opportunity:" cls="w-[67px] h-[22px]" />
          <Field v="59: Multipa Center for Litera..." cls="w-[173px] h-[22px]" lookup />
        </div>
        <div className="flex">
          <Label t="Client:" cls="w-[67px] h-[22px]" />
          <Field v="Multipa Center for Literacy" cls="w-[173px] h-[22px]" lookup />
        </div>
      </div>
      <div className="ml-[10px] flex flex-col gap-[2px] shrink-0 w-[243px]">
        <div className="flex">
          <Label t="Event Name:*" cls="w-[74px] h-[20px]" />
          <Field v="Fundraising Banquet" cls="w-[169px] h-[20px]" />
        </div>
        <div className="flex">
          <Label t="Date Range:" cls="w-[74px] h-[20px]" />
          <Field v="Sat Jul 25 2020" cls="w-[169px] h-[20px]" />
        </div>
      </div>
      <div className="ml-[10px] flex flex-col gap-[2px] shrink-0 w-[242px]">
        <div className="flex">
          <Label t="Quote Date:" cls="w-[66px] h-[20px]" />
          <Field v="Tue Feb 04 2020" cls="w-[176px] h-[20px]" />
        </div>
        <div className="flex">
          <Label t="Valid Until:" cls="w-[66px] h-[20px]" />
          <Field v="Wed Mar 04 2020" cls="w-[176px] h-[20px]" />
        </div>
      </div>
      <div className="ml-[10px] flex flex-col gap-[3px] shrink-0 w-[254px]">
        <div className="flex">
          <Label t="Status:*" cls="w-[47px] h-[21px]" />
          <Field v="Quoted" cls="w-[207px] h-[21px]" tint lookup />
        </div>
        <div className="flex">
          <Label t="PO #:" cls="w-[47px] h-[20px]" />
          <Field cls="w-[207px] h-[20px]" />
        </div>
      </div>
    </div>
  );
}

const upperCols = 'grid-cols-[19px_65px_73px_119px_184px_192px_117px_100px_79px_99px_99px_132px]';
const lowerCols = 'grid-cols-[18px_97px_108px_185px_119px_200px_55px_226px_112px_137px]';

const SortUp = () => (
  <svg width="10" height="6" viewBox="0 0 10 6" className="block shrink-0">
    <path d="M0 6L5 0L10 6Z" fill="#8a8a8a" />
  </svg>
);
const RowArrow = () => (
  <svg width="5" height="8" viewBox="0 0 5 8" className="block">
    <path d="M0 0L5 4L0 8Z" fill="#777" />
  </svg>
);

function HeadCell({ t, sort, cls = '', narrow }: { t?: string; sort?: boolean; cls?: string; narrow?: boolean }) {
  return (
    <div className={`h-full flex items-center justify-between px-[3px] border-r border-[#d4d4d4] text-[11px] leading-[13px] text-[#444] ${cls}`}>
      <span className={narrow ? 'w-[50px] pt-[2px]' : ''}>{t}</span>
      {sort && (
        <span className="pr-[9px]">
          <SortUp />
        </span>
      )}
    </div>
  );
}

function UpperGrid() {
  const head = ['', 'Status', 'Conflict', 'Location Name', 'Booked From', 'Booked To', 'Description', 'Attendance', 'Charge', 'Discount', 'Surcharge', 'Net Charge'];
  const cell = 'h-full flex items-center px-[4px] pt-[2px] border-r border-[#b9cfe0] text-[11px] whitespace-nowrap overflow-hidden';
  return (
    <div className="h-[79px] border-b border-[#a8a8a8] shrink-0 box-content">
      <div className={`grid ${upperCols} h-[21px]`}>
        {head.map((h) => (
          <HeadCell key={h} t={h} cls="px-[4px] pt-[1px]" sort={h === 'Booked From' || h === 'Booked To'} />
        ))}
      </div>
      <div className={`grid ${upperCols} h-[20px] border-y border-dotted border-[#444] text-[#333]`}>
        <div className="h-full flex items-center justify-center">
          <RowArrow />
        </div>
        <div className={`${cell} bg-[#f0fbff] text-[#222]`}>Quoted</div>
        <div className={`${cell} bg-[#33cc33] text-white`}>None</div>
        <div className={`${cell} bg-[#cce4f7]`}>Grand Ballroom</div>
        <div className={`${cell} bg-[#cce4f7]`}>Sat Jul 25 2020 @ 4:00 PM</div>
        <div className={`${cell} bg-[#f8fcff]`}>Sat Jul 25 2020 @ 11:00 PM</div>
        <div className={`${cell} bg-[#cce4f7]`}>Fundraising Banquet...</div>
        <div className={`${cell} bg-[#cce4f7] justify-end`}>500</div>
        <div className={`${cell} bg-[#cce4f7] justify-end`}>$2,115.00</div>
        <div className={`${cell} bg-[#cce4f7] justify-end`}>$0.00</div>
        <div className={`${cell} bg-[#cce4f7] justify-end`}>$0.00</div>
        <div className={`${cell} bg-[#cce4f7] justify-end pr-[2px]`}>$2,115.00</div>
      </div>
    </div>
  );
}

function SumBox({ v, cls }: { v: string; cls: string }) {
  return <div className={`${cls} h-[24px] pt-[2px] border border-[#bbbbbb] flex items-center justify-end px-[4px] text-[11px] text-[#444]`}>{v}</div>;
}

function UpperFooter() {
  return (
    <div className={`grid ${upperCols} h-[31px] pt-[3px] items-start shrink-0`}>
      <SumBox v="1" cls="col-start-2 ml-[1px] mr-[1px]" />
      <SumBox v="$0.00" cls="col-start-10 ml-[1px] mr-[2px]" />
      <SumBox v="$0.00" cls="col-start-11 ml-[1px] mr-[1px]" />
      <SumBox v="$2,115.00" cls="col-start-12 ml-[1px] mr-[2px]" />
    </div>
  );
}

const setupRows = [
  { n: 1, item: 'Projector-HD 3 6000', total: '$500.00', bg: 'bg-[#e3eff9]', first: 'bg-white' },
  { n: 2, item: 'Screen-Tripod', total: '$45.00', bg: 'bg-[#fafafa]', first: 'bg-[#fafafa]' },
  { n: 3, item: 'Mic-Standard', total: '$20.00', bg: 'bg-[#eeeeee]', first: 'bg-[#eeeeee]' },
  { n: 4, item: 'Mic Stand', total: '$10.00', bg: 'bg-[#fafafa]', first: 'bg-[#fafafa]' },
];

function Check() {
  return (
    <div className="w-[13px] h-[13px] border border-[#9a9a9a] bg-white flex items-center justify-center">
      <svg width="11" height="11" viewBox="0 0 11 11" className="block">
        <path d="M2 5.5L4.5 8L9 2.5" fill="none" stroke="#444" strokeWidth="1.5" />
      </svg>
    </div>
  );
}

function LowerGrid() {
  const box = 'h-full flex items-center px-[3px] border-r border-b border-[#d8d8d8] text-[11px] text-[#444] whitespace-nowrap';
  const cell = `${box} pt-[2px]`;
  return (
    <div className="h-[135px] shrink-0">
      <div className={`grid ${lowerCols} h-[33px] border-b border-[#c4c4c4]`}>
        <HeadCell />
        <HeadCell t="Item #" sort cls="pl-[4px]" />
        <HeadCell t="Financial Subgroup" narrow cls="pl-[4px]" />
        <HeadCell t="Setup Item" />
        <HeadCell t="Quantity" />
        <HeadCell t="Use Owner Times" />
        <HeadCell t="Billable" />
        <HeadCell t="Required From Time" cls="pl-[4px]" />
        <HeadCell t="Required To Time" cls="pl-[4px]" />
        <HeadCell t="Total Charge" cls="pl-[4px]" />
      </div>
      {setupRows.map((r, i) => (
        <div key={r.n} className={`grid ${lowerCols} h-[21px]`}>
          <div className="h-full flex items-center justify-center">{i === 0 && <RowArrow />}</div>
          <div className={`${cell} ${r.first} justify-end border-l border-l-[#c4c4c4]`}>{r.n}</div>
          <div className={`${cell} bg-[#d5bfd9] text-[#222] pl-[4px]`}>AV</div>
          <div className={`${cell} ${r.bg}`}>{r.item}</div>
          <div className={`${cell} ${r.bg} justify-end`}>1.00</div>
          <div className={`${box} ${r.bg} justify-center`}>
            <Check />
          </div>
          <div className={`${box} ${r.bg} justify-center`}>
            <Check />
          </div>
          <div className={`${cell} ${r.bg} pl-[4px]`}>4:00 PM</div>
          <div className={`${cell} ${r.bg} pl-[4px]`}>11:00 PM</div>
          <div className={`${cell} ${r.bg} justify-end`}>{r.total}</div>
        </div>
      ))}
    </div>
  );
}

function LowerPanel() {
  return (
    <div className="ml-[10px] mr-[10px] flex flex-col shrink-0">
      <div className="flex items-end h-[27px] relative z-10">
        <Tab label="Setup" icon={<Table s={16} />} w="w-[71px]" active />
        <Tab label="Staffing" icon={<Worker s={16} />} w="w-[79px]" />
        <Tab label="Catering" icon={<Cutlery s={16} />} w="w-[83px]" />
        <Tab label="Beverages" icon={<Martini s={16} />} w="w-[93px]" />
        <Tab label="Packages" icon={<BoxIcon s={16} />} w="w-[87px]" />
        <Tab label="Notes" icon={<NoteTilt s={16} />} w="w-[70px]" />
        <Tab label="Floor Plans" icon={<FloorPlan s={16} />} w="w-[94px]" />
        <Tab label="Images" icon={<Picture s={16} />} w="w-[76px]" />
      </div>
      <div className="h-[195px] -mt-px border border-[#a8a8a8] flex flex-col">
        <div className="h-[27px] flex items-center pl-[2px] shrink-0">
          <Tb icon={<NewDoc />} />
          <Tb icon={<Cubes />} />
          <Sep />
          <Tb icon={<Pencil />} />
          <Tb icon={<Calc />} />
          <Tb icon={<RedX />} />
          <Sep />
          <Tb icon={<GrayDoc />} />
          <Sep />
          <TbDrop icon={<GridGreen />} w="w-[36px]" />
          <Tb icon={<WinRestore />} />
          <Tb icon={<BookI />} />
          <Sep />
          <Tb icon={<CircleUp />} />
          <Tb icon={<GreenDown />} />
          <Sep />
          <TbDrop icon={<Funnel />} />
          <Sep />
          <Search cls="ml-[4px] mr-[9px] w-[149px]" />
          <Sep />
          <Tb icon={<SaveBlue />} />
          <TbCaret />
          <Sep />
          <Tb icon={<PageMag />} />
        </div>
        <LowerGrid />
        <div className="flex-1" />
        <div className={`grid ${lowerCols} h-[31px] pt-[3px] border-t border-[#a8a8a8] items-start shrink-0`}>
          <SumBox v="4" cls="col-start-4 ml-[1px] mr-[1px]" />
          <SumBox v="$575.00" cls="col-start-10 ml-[2px] mr-[1px]" />
        </div>
      </div>
    </div>
  );
}

function BookedPanel() {
  return (
    <div className="flex-1 -mt-px border border-[#a8a8a8] flex flex-col min-h-0">
      <div className="h-[26px] pt-[2px] flex items-center pl-[2px] shrink-0">
        <Tb icon={<NewDoc />} />
        <Tb icon={<SimDoc />} />
        <Tb icon={<Cubes />} />
        <Sep />
        <Tb icon={<SaveGray />} />
        <Tb icon={<Undo />} />
        <Sep />
        <Tb icon={<Pencil />} />
        <Tb icon={<BookPlus />} />
        <Tb icon={<BookCopy />} />
        <Tb icon={<BookBlue />} />
        <Tb icon={<Handshake />} />
        <Tb icon={<TagIcon />} />
        <TbDrop icon={<Nodes />} />
        <Tb icon={<Calc />} />
        <Tb icon={<RedX />} />
        <Sep />
        <Tb icon={<GrayDoc />} />
        <Sep />
        <TbDrop icon={<GridGreen />} w="w-[36px]" />
        <Tb icon={<WinRestore />} />
        <Tb icon={<BookI />} />
        <Sep />
        <Tb icon={<ClipYellow />} />
        <Sep />
        <Tb icon={<CircleUp />} />
        <Tb icon={<CircleDown />} />
        <Sep />
        <TbDrop icon={<Funnel />} />
        <Sep />
        <Search cls="ml-[5px] mr-[6px] w-[151px]" />
        <Sep />
        <Tb icon={<SaveBlue />} />
        <TbCaret />
        <Sep />
        <Tb icon={<PageMag />} />
      </div>
      <UpperGrid />
      <UpperFooter />
      <div className="h-[21px] flex items-start pt-[5px] justify-center gap-[1px] shrink-0">
        {[0, 1, 2, 3, 4].map((d) => (
          <div key={d} className="w-[2px] h-[2px] bg-[#777] mr-[1px]" />
        ))}
      </div>
      <LowerPanel />
    </div>
  );
}

function MainArea() {
  return (
    <div className="flex-1 min-w-0 flex flex-col">
      <div className="h-[28px] flex items-end border-b-2 border-[#0072c6] shrink-0 relative">
        <div className="w-[189px] h-[24px] bg-[#0072c6] flex items-center pl-[11px] pr-[8px] text-[11px] text-white whitespace-nowrap">
          <Cart s={16} />
          <span className="ml-[3px] mt-[3px] flex-1">Q000003A: Fundraising ...</span>
          <svg width="10" height="10" viewBox="0 0 10 10" className="block">
            <path d="M1 1L9 9M9 1L1 9" stroke="#fff" strokeWidth="1.8" />
          </svg>
        </div>
        <div className="absolute right-[6px] top-[9px]">
          <GrayCaret />
        </div>
      </div>
      <div className="flex-1 min-h-0 flex flex-col pl-[10px] pr-[10px] pb-[10px]">
        <QuoteHeader />
        <div className="flex items-end h-[27px] mt-[2px] relative z-10 shrink-0">
          <Tab label="Event Detail" icon={<Panes s={16} />} w="w-[101px]" active />
          <Tab label="Financial" icon={<CalcGray s={16} />} w="w-[82px]" />
          <Tab label="Communications" icon={<Bubble s={16} />} w="w-[119px]" />
          <Tab label="Tasks" icon={<Task s={16} />} w="w-[69px]" />
          <Tab label="Documents" icon={<DocClip s={16} />} w="w-[94px]" />
        </div>
        <div className="flex-1 -mt-px border border-[#a8a8a8] px-[2px] pt-[2px] pb-[3px] flex flex-col min-h-0">
          <div className="flex items-end h-[27px] relative z-10 shrink-0">
            <Tab label="Booked Locations" icon={<Building s={16} />} w="w-[127px]" active />
            <Tab label="Staffing" icon={<Worker s={16} />} w="w-[79px]" />
            <Tab label="Miscellaneous" icon={<Mound s={16} />} w="w-[107px]" />
            <Tab label="All Resources" icon={<Resources s={16} />} w="w-[105px]" />
          </div>
          <BookedPanel />
        </div>
      </div>
    </div>
  );
}

function Arrows() {
  return (
    <svg width="1516" height="771" viewBox="0 0 1516 771" className="absolute left-0 top-0 pointer-events-none z-20">
      <path d="M828 40L860 47L855 55L946 119L941 125L850 62L844 68Z" fill="#f00000" />
      <path d="M398 231L416 205L421 213L511 149L516 155L426 219L430 225Z" fill="#f00000" />
    </svg>
  );
}

export default function App() {
  return (
    <div className="w-[1516px] h-[771px] bg-black relative overflow-hidden font-['Roboto',sans-serif]">
      <div className="absolute inset-x-[7px] top-[7px] bottom-[7px] border border-b-0 border-[#0072c6] bg-white flex flex-col">
        <TitleBar />
        <RibbonTabs />
        <Ribbon />
        <div className="flex-1 min-h-0 flex">
          <Sidebar />
          <MainArea />
        </div>
        <div className="h-[24px] bg-[#0072c6] shrink-0 flex items-end justify-end pr-[1px] pb-[2px]">
          <svg width="11" height="11" viewBox="0 0 11 11" className="block">
            <path d="M8 0h3v3H8zM4 4h3v3H4zM8 4h3v3H8zM0 8h3v3H0zM4 8h3v3H4zM8 8h3v3H8z" fill="#9ec7e8" />
          </svg>
        </div>
      </div>
      <Arrows />
    </div>
  );
}
